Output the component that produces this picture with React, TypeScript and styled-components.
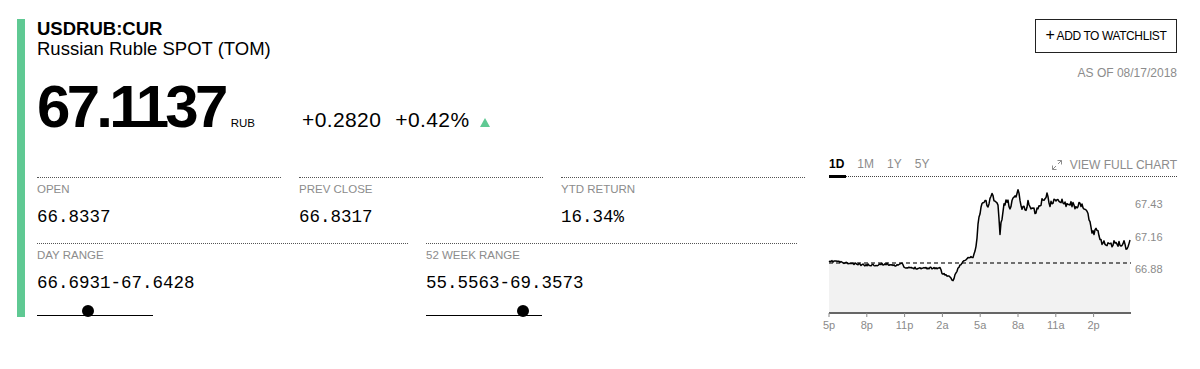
import styled, { createGlobalStyle } from "styled-components";

const GlobalStyle = createGlobalStyle`
  body {
    margin: 0;
    background: #fff;
    color: #000;
    font-family: "Liberation Sans", Arial, sans-serif;
  }
`;

const GREEN = "#5fc993";
const GRAY = "#8c8c8c";

interface IStat {
    label: string,
    value: string,
}

interface IRange extends IStat {
    low: number,
    high: number,
}

const quote = {
    ticker: "USDRUB:CUR",
    name: "Russian Ruble SPOT (TOM)",
    price: 67.1137,
    currency: "RUB",
    change: "+0.2820",
    changePct: "+0.42%",
    asOf: "AS OF 08/17/2018",
};

const topStats: IStat[] = [
    { label: "OPEN", value: "66.8337" },
    { label: "PREV CLOSE", value: "66.8317" },
    { label: "YTD RETURN", value: "16.34%" },
];

const rangeStats: IRange[] = [
    { label: "DAY RANGE", value: "66.6931-67.6428", low: 66.6931, high: 67.6428 },
    { label: "52 WEEK RANGE", value: "55.5563-69.3573", low: 55.5563, high: 69.3573 },
];

const tabs = ["1D", "1M", "1Y", "5Y"];
const xLabels = ["5p", "8p", "11p", "2a", "5a", "8a", "11a", "2p"];
const yLabels = [
    { text: "67.43", y: 31 },
    { text: "67.16", y: 64 },
    { text: "66.88", y: 96 },
];

// rough shape of the intraday line, in page pixels
const anchors: [number, number][] = [
    [829, 262], [835, 261], [845, 263], [855, 264], [865, 265], [875, 265], [885, 264],
    [895, 265], [903, 264], [904, 268], [915, 268], [930, 268], [940, 268], [942, 273],
    [948, 276], [953, 281], [955, 275], [958, 268], [963, 262], [968, 258], [973, 257],
    [976, 248], [978, 225], [981, 208], [984, 200], [988, 205], [992, 195], [995, 200],
    [998, 205], [1000, 233], [1003, 210], [1006, 200], [1010, 206], [1014, 198], [1018, 190],
    [1021, 205], [1025, 210], [1028, 203], [1032, 208], [1036, 212], [1040, 205], [1044, 198],
    [1047, 195], [1050, 205], [1054, 200], [1058, 202], [1062, 199], [1066, 204], [1070, 203],
    [1074, 206], [1078, 205], [1082, 207], [1086, 210], [1089, 218], [1091, 230], [1094, 232],
    [1097, 228], [1100, 240], [1105, 244], [1110, 246], [1115, 243], [1120, 244], [1124, 243],
    [1127, 248], [1130, 240],
];

const PLOT_W = 302;
const PLOT_B = 136;

const buildLine = () => {
    let seed = 11;
    const rand = () => {
        seed = (seed * 16807) % 2147483647;
        return seed / 2147483647;
    };
    const pts: string[] = [];
    for (let i = 0; i < anchors.length - 1; i++) {
        const [x0, y0] = anchors[i];
        const [x1, y1] = anchors[i + 1];
        const steps = Math.max(1, Math.round(x1 - x0));
        for (let s = 0; s < steps; s++) {
            const t = s / steps;
            let y = y0 + (y1 - y0) * t;
            const amp = y < 250 ? 3 : 1;
            y += (rand() - 0.5) * 2 * amp;
            pts.push(`${(x0 + (x1 - x0) * t - 829).toFixed(1)},${(y - 177).toFixed(1)}`);
        }
    }
    const last = anchors[anchors.length - 1];
    pts.push(`${last[0] - 829},${last[1] - 177}`);
    return pts;
};

const linePts = buildLine();

const App = () => {
    return (
        <>
            <GlobalStyle />
            <Page>
                <Accent />
                <Main>
                    <Header>
                        <div>
                            <Ticker>{quote.ticker}</Ticker>
                            <Name>{quote.name}</Name>
                        </div>
                        <HeaderRight>
                            <WatchButton><Plus>+</Plus>ADD TO WATCHLIST</WatchButton>
                            <AsOf>{quote.asOf}</AsOf>
                        </HeaderRight>
                    </Header>
                    <Body>
                        <LeftCol>
                            <PriceRow>
                                <Price>{quote.price.toFixed(4)}</Price>
                                <Currency>{quote.currency}</Currency>
                                <Change>{quote.change}</Change>
                                <Change $gap={14}>{quote.changePct}</Change>
                                <UpArrow />
                            </PriceRow>
                            <StatRow $cols={3} $width={244}>
                                {topStats.map((s) => (
                                    <Stat key={s.label}>
                                        <Label>{s.label}</Label>
                                        <Value>{s.value}</Value>
                                    </Stat>
                                ))}
                            </StatRow>
                            <StatRow $cols={2} $width={371}>
                                {rangeStats.map((s) => (
                                    <Stat key={s.label}>
                                        <Label>{s.label}</Label>
                                        <Value>{s.value}</Value>
                                        <Track>
                                            <Dot style={{ left: `${((quote.price - s.low) / (s.high - s.low)) * 116 - 6}px` }} />
                                        </Track>
                                    </Stat>
                                ))}
                            </StatRow>
                        </LeftCol>
                        <ChartPanel>
                            <TabRow>
                                {tabs.map((t, i) => (
                                    <Tab key={t} $active={i === 0}>{t}</Tab>
                                ))}
                                <FullChart>
                                    <svg width="12" height="12" viewBox="0 0 12 12" fill="none" stroke={GRAY} strokeWidth="1">
                                        <path d="M1.5 10.5 L5 7" />
                                        <path d="M1.5 6.5 V10.5 H5.5" />
                                        <path d="M7 5 L10.5 1.5" />
                                        <path d="M6.5 1.5 H10.5 V5.5" />
                                    </svg>
                                    VIEW FULL CHART
                                </FullChart>
                            </TabRow>
                            <Chart width="348" height="158" viewBox="0 0 348 158">
                                <polygon points={`0,${PLOT_B} ${linePts.join(" ")} ${linePts[linePts.length - 1].split(",")[0]},${PLOT_B}`} fill="#f2f2f2" />
                                <line x1="0" y1="86" x2={PLOT_W} y2="86" stroke="#444" strokeWidth="1.5" strokeDasharray="4 3" />
                                <polyline points={linePts.join(" ")} fill="none" stroke="#000" strokeWidth="1.5" strokeLinejoin="round" />
                                <line x1="0" y1={PLOT_B} x2={PLOT_W} y2={PLOT_B} stroke="#666" strokeWidth="2" />
                                {xLabels.map((l, i) => (
                                    <g key={l}>
                                        <line x1={i * 37.8} y1={PLOT_B} x2={i * 37.8} y2={PLOT_B + 4} stroke="#888" strokeWidth="1" />
                                        <AxisText x={i * 37.8} y="152" textAnchor="middle">{l}</AxisText>
                                    </g>
                                ))}
                                {yLabels.map((l) => (
                                    <AxisText key={l.text} x="306" y={l.y}>{l.text}</AxisText>
                                ))}
                            </Chart>
                        </ChartPanel>
                    </Body>
                </Main>
            </Page>
        </>
    );
};

export default App;

const Page = styled.div`
    display: flex;
    align-items: flex-start;
    width: 1200px;
    box-sizing: border-box;
    padding: 19px 23px 0 17px;
`;

const Accent = styled.div`
    flex: none;
    width: 8px;
    height: 298px;
    background: ${GREEN};
`;

const Main = styled.div`
    flex: 1;
    margin-left: 12px;
    display: flex;
    flex-direction: column;
`;

const Header = styled.div`
    display: flex;
    justify-content: space-between;
    align-items: flex-start;
`;

const Ticker = styled.h1`
    margin: 0;
    font-size: 18.5px;
    line-height: 20px;
    font-weight: 700;
`;

const Name = styled.div`
    font-size: 18.5px;
    line-height: 20px;
`;

const HeaderRight = styled.div`
    display: flex;
    flex-direction: column;
    align-items: flex-end;
`;

const WatchButton = styled.button`
    display: flex;
    align-items: center;
    justify-content: center;
    gap: 2px;
    width: 142px;
    height: 34px;
    padding: 0;
    border: 1.5px solid #222;
    background: #fff;
    color: #000;
    font-family: "Liberation Sans", Arial, sans-serif;
    font-size: 12px;
    letter-spacing: -0.4px;
    cursor: pointer;
`;

const Plus = styled.span`
    font-size: 16px;
    line-height: 1;
    margin-top: -2px;
`;

const AsOf = styled.div`
    margin-top: 13px;
    font-size: 12px;
    line-height: 14px;
    color: ${GRAY};
`;

const Body = styled.div`
    display: flex;
    justify-content: space-between;
    align-items: flex-start;
`;

const LeftCol = styled.div`
    width: 768px;
`;

const PriceRow = styled.div`
    display: flex;
    align-items: baseline;
    margin-top: 1px;
`;

const Price = styled.div`
    font-size: 60px;
    line-height: 52px;
    font-weight: 700;
    letter-spacing: -3.7px;
`;

const Currency = styled.div`
    margin-left: 6px;
    font-size: 11.5px;
    line-height: 1;
`;

const Change = styled.div<{ $gap?: number }>`
    margin-left: ${(p) => p.$gap ?? 47}px;
    font-size: 21px;
    line-height: 1;
    letter-spacing: 0.4px;
`;

const UpArrow = styled.div`
    margin-left: 11px;
    width: 0;
    height: 0;
    border-left: 5.5px solid transparent;
    border-right: 5.5px solid transparent;
    border-bottom: 9px solid ${GREEN};
`;

const StatRow = styled.div<{ $cols: number, $width: number }>`
    display: grid;
    grid-template-columns: repeat(${(p) => p.$cols}, ${(p) => p.$width}px);
    column-gap: 18px;
    margin-top: ${(p) => (p.$cols === 3 ? 44 : 16)}px;
`;

const Stat = styled.div`
    border-top: 1px dotted #555;
    padding-top: 4px;
`;

const Label = styled.div`
    font-size: 11.5px;
    line-height: 14px;
    color: ${GRAY};
`;

const Value = styled.div`
    margin-top: 11px;
    font-family: "Liberation Mono", "Courier New", monospace;
    font-size: 17.5px;
    line-height: 20px;
`;

const Track = styled.div`
    position: relative;
    width: 116px;
    height: 10px;
    margin-top: 12px;
    border-bottom: 1.5px solid #000;
`;

const Dot = styled.span`
    position: absolute;
    top: -0.5px;
    width: 12px;
    height: 12px;
    border-radius: 50%;
    background: #000;
`;

const ChartPanel = styled.div`
    width: 348px;
    margin-top: 76px;
`;

const TabRow = styled.div`
    display: flex;
    align-items: flex-end;
    gap: 11px;
    border-bottom: 1px dotted #444;
`;

const Tab = styled.div<{ $active: boolean }>`
    padding: 0 2px 3px 0;
    margin-bottom: -2px;
    font-size: 12px;
    line-height: 16px;
    font-weight: ${(p) => (p.$active ? 700 : 400)};
    color: ${(p) => (p.$active ? "#000" : GRAY)};
    border-bottom: 3px solid ${(p) => (p.$active ? "#000" : "transparent")};
`;

const FullChart = styled.div`
    margin-left: auto;
    margin-bottom: 3px;
    display: flex;
    align-items: center;
    gap: 7px;
    font-size: 12px;
    line-height: 16px;
    color: ${GRAY};
`;

const Chart = styled.svg`
    display: block;
    overflow: visible;
`;

const AxisText = styled.text`
    font-family: "Liberation Sans", Arial, sans-serif;
    font-size: 11px;
    fill: #8a8a8a;
`;
